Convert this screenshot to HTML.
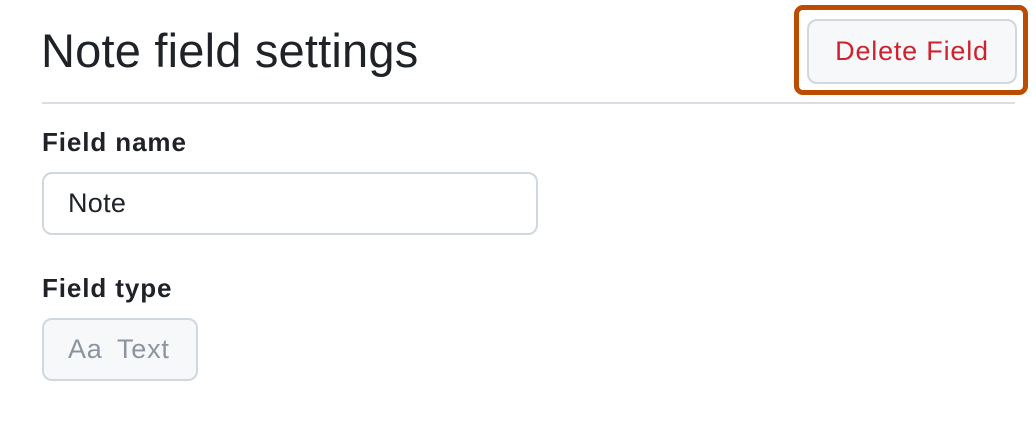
<!DOCTYPE html>
<html><head><style>
body{margin:0;width:1036px;height:422px;background:#fff;font-family:"Liberation Sans",sans-serif;color:#1f2328;position:relative;overflow:hidden}
.a{position:absolute}
</style></head><body>
<div class="a" style="left:41px;top:23px;font-size:47px;line-height:56px;letter-spacing:0.2px">Note field settings</div>
<div class="a" style="left:42px;top:102px;width:973px;height:2px;background:#d8dee4"></div>
<div class="a" style="left:794px;top:5px;width:224px;height:80px;border:5px solid #bc4c00;border-radius:9px"></div>
<div class="a" style="left:807px;top:19px;width:206px;height:61px;border:2px solid #d0d7de;border-radius:10px;background:#f6f8fa;color:#cf222e;font-size:27px;line-height:61px;text-align:center;letter-spacing:0.8px">Delete Field</div>
<div class="a" style="left:42px;top:127px;font-size:26px;font-weight:bold;line-height:30px;letter-spacing:0.9px">Field name</div>
<div class="a" style="left:42px;top:172px;width:492px;height:59px;border:2px solid #d0d7de;border-radius:10px;background:#fff"></div>
<div class="a" style="left:68px;top:188px;font-size:27px;line-height:30px;letter-spacing:0.3px">Note</div>
<div class="a" style="left:42px;top:273px;font-size:26px;font-weight:bold;line-height:30px;letter-spacing:0.9px">Field type</div>
<div class="a" style="left:42px;top:318px;width:152px;height:59px;border:2px solid #d0d7de;border-radius:10px;background:#f6f8fa;color:#8c959f;font-size:27px;line-height:59px;letter-spacing:0.8px"><span style="position:absolute;left:24px">Aa</span><span style="position:absolute;left:73px">Text</span></div>
</body></html>
